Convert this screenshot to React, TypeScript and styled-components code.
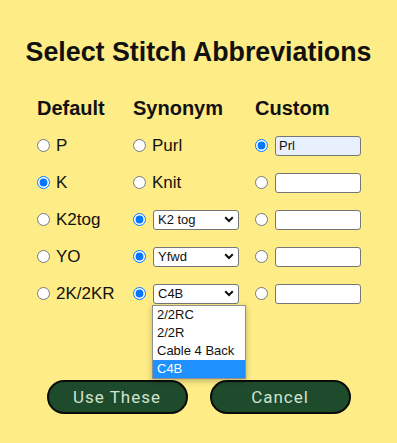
import { createGlobalStyle, styled } from "styled-components";

// STYLE
const GlobalStyle = createGlobalStyle`
  html, body {
    margin: 0;
    padding: 0;
    background: #feec86;
  }
  body {
    font-family: "Liberation Sans", Arial, sans-serif;
    color: #111;
  }
`;

const Page = styled.main`
  width: 397px;
  height: 443px;
  display: flex;
  flex-direction: column;
  align-items: center;
  overflow: hidden;
`;

const Title = styled.h2`
  margin: 37px 0 0;
  font-size: 26.8px;
  line-height: 30px;
  font-weight: bold;
  text-align: center;
  color: #111;
`;

const Table = styled.div`
  align-self: stretch;
  margin-top: 23px;
  padding-left: 37px;
  display: grid;
  grid-template-columns: 96px 122px auto;
  grid-auto-rows: 37px;
  align-items: center;
`;

const Head = styled.div`
  font-size: 20px;
  font-weight: bold;
  line-height: 23px;
`;

const Cell = styled.label<{ $gap?: number }>`
  position: relative;
  display: flex;
  align-items: center;
  gap: ${(p) => p.$gap ?? 6}px;
  font-size: 17px;
  line-height: 20px;
`;

const Radio = styled.input.attrs({ type: "radio" })`
  width: 13px;
  height: 13px;
  margin: 0;
  accent-color: #0075ff;
`;

const SelectBox = styled.div`
  width: 86px;
  height: 20px;
  box-sizing: border-box;
  border: 1px solid #767676;
  border-radius: 3px;
  background: #fff;
  display: flex;
  align-items: center;
  justify-content: space-between;
  padding: 0 4px;
  font-size: 13px;
  color: #111;
`;

const TextBox = styled.input<{ $filled?: boolean }>`
  width: 86px;
  height: 20px;
  box-sizing: border-box;
  border: 1px solid #767676;
  border-radius: 3px;
  background: ${(p) => (p.$filled ? "#e8f0fe" : "#fff")};
  padding: 0 3px;
  font-family: "Liberation Sans", Arial, sans-serif;
  font-size: 13px;
  color: #111;
  outline: none;
`;

const OptionList = styled.ul`
  position: absolute;
  left: 19px;
  top: 21px;
  width: 92px;
  margin: 0;
  padding: 0;
  list-style: none;
  background: #fff;
  border: 1px solid #8f8f8f;
  box-shadow: 0 2px 6px rgba(0, 0, 0, 0.25);
  z-index: 5;
`;

const OptionItem = styled.li<{ $active?: boolean }>`
  height: 18px;
  line-height: 18px;
  padding: 0 4px;
  font-size: 13px;
  white-space: nowrap;
  background: ${(p) => (p.$active ? "#1e90ff" : "#fff")};
  color: ${(p) => (p.$active ? "#fff" : "#111")};
`;

const Buttons = styled.div`
  display: flex;
  gap: 22px;
  margin-top: 68px;
`;

const PillButton = styled.button`
  width: 141px;
  height: 34px;
  border: 2px solid #0b0b0b;
  border-radius: 17px;
  background: #1d4b2b;
  color: #d3e2cf;
  font-family: Roboto, "Open Sans", sans-serif;
  font-size: 17px;
  letter-spacing: 1px;
  padding: 0;
`;

const Chevron = () => (
  <svg width="10" height="7" viewBox="0 0 10 7">
    <path d="M1.2 1.2 L5 5 L8.8 1.2" fill="none" stroke="#111" strokeWidth="2" />
  </svg>
);

// DATA
const rows = [
  { def: "P", syn: "Purl", synSelect: false, pick: 2, custom: "Prl" },
  { def: "K", syn: "Knit", synSelect: false, pick: 0, custom: "" },
  { def: "K2tog", syn: "K2 tog", synSelect: true, pick: 1, custom: "" },
  { def: "YO", syn: "Yfwd", synSelect: true, pick: 1, custom: "" },
  { def: "2K/2KR", syn: "C4B", synSelect: true, pick: 1, custom: "", open: true },
];

const options = ["2/2RC", "2/2R", "Cable 4 Back", "C4B"];

// COMP
const App = () => {
  return (
    <Page>
      <GlobalStyle />
      <Title>Select Stitch Abbreviations</Title>
      <Table>
        <Head>Default</Head>
        <Head>Synonym</Head>
        <Head>Custom</Head>
        {rows.map((r, i) => [
          <Cell key={`d${i}`}>
            <Radio name={`r${i}`} defaultChecked={r.pick === 0} />
            {r.def}
          </Cell>,
          <Cell key={`s${i}`} $gap={r.synSelect ? 7 : 6}>
            <Radio name={`r${i}`} defaultChecked={r.pick === 1} />
            {r.synSelect ? (
              <SelectBox>
                <span>{r.syn}</span>
                <Chevron />
              </SelectBox>
            ) : (
              r.syn
            )}
            {r.open && (
              <OptionList>
                {options.map((o) => (
                  <OptionItem key={o} $active={o === r.syn}>
                    {o}
                  </OptionItem>
                ))}
              </OptionList>
            )}
          </Cell>,
          <Cell key={`c${i}`} $gap={7}>
            <Radio name={`r${i}`} defaultChecked={r.pick === 2} />
            <TextBox $filled={!!r.custom} defaultValue={r.custom} />
          </Cell>,
        ])}
      </Table>
      <Buttons>
        <PillButton>Use These</PillButton>
        <PillButton>Cancel</PillButton>
      </Buttons>
    </Page>
  );
};

export default App;
